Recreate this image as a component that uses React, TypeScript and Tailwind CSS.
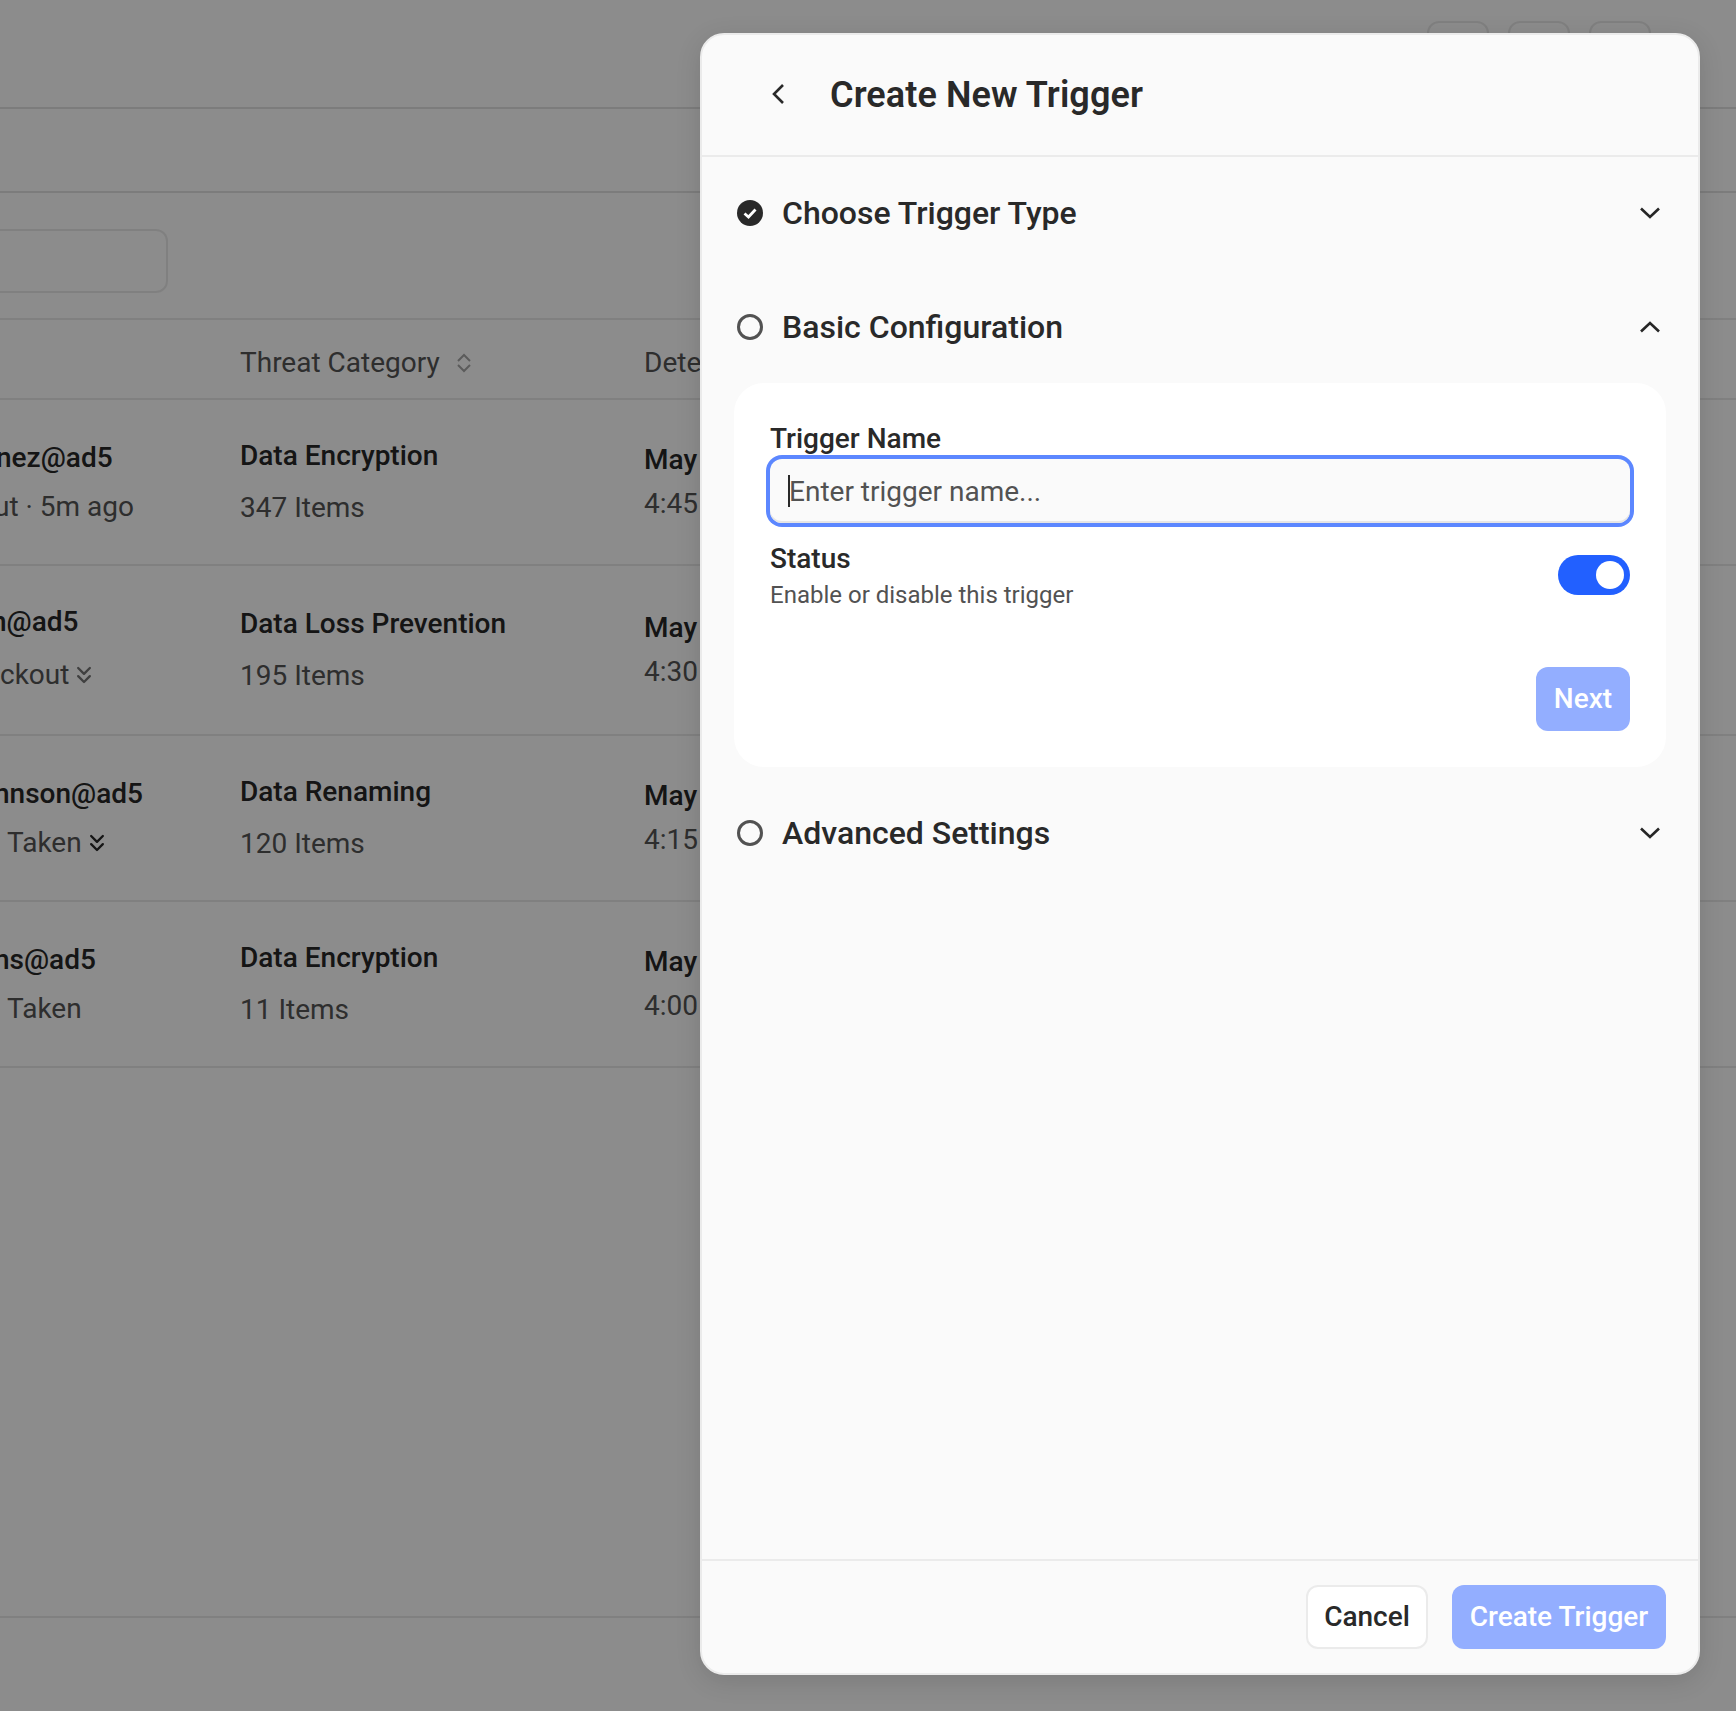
import { ChevronsDown } from 'lucide-react'

const rows = [
  {
    h: 'h-[166px]', colPad: '', who: 'nez@ad5', whoPad: '-ml-[4px]', sub: 'ut · 5m ago', subPad: '-ml-[6px]', more: '',
    cat: 'Data Encryption', items: '347 Items', time: '4:45',
  },
  {
    h: 'h-[170px]', colPad: 'pb-[3px]', who: 'n@ad5', whoPad: '-ml-[9px] mb-[4px]', sub: 'ckout', subPad: 'ml-0', more: 'text-[#737373]',
    cat: 'Data Loss Prevention', items: '195 Items', time: '4:30',
  },
  {
    h: 'h-[166px]', colPad: '', who: 'nnson@ad5', whoPad: '-ml-[6px]', sub: 'Taken', subPad: 'ml-[7px]', more: 'text-[#262626]',
    cat: 'Data Renaming', items: '120 Items', time: '4:15',
  },
  {
    h: 'h-[166px]', colPad: '', who: 'ns@ad5', whoPad: '-ml-[6px]', sub: 'Taken', subPad: 'ml-[7px]', more: '',
    cat: 'Data Encryption', items: '11 Items', time: '4:00',
  },
]

function Chevron({ up = false }: { up?: boolean }) {
  return (
    <svg width="22" height="14" viewBox="0 0 22 14" fill="none" className="text-[#262626]">
      <path d={up ? 'M2 11.5 L11 3 L20 11.5' : 'M2 2.5 L11 11 L20 2.5'} stroke="currentColor" strokeWidth="2.6" />
    </svg>
  )
}

function Section({ title, done = false, open = false, className = '' }: { title: string; done?: boolean; open?: boolean; className?: string }) {
  return (
    <div className={`flex h-[112px] items-center pl-[35px] pr-[37px] ${className}`}>
      {done ? (
        <svg width="26" height="26" viewBox="0 0 26 26" className="shrink-0">
          <circle cx="13" cy="13" r="13" fill="#292929" />
          <path d="M7.5 13.5 L11.5 17 L18.5 9.5" fill="none" stroke="#fff" strokeWidth="2.8" />
        </svg>
      ) : (
        <div className="h-[26px] w-[26px] shrink-0 rounded-full border-[3px] border-[#525252]" />
      )}
      <span className="ml-[19px] flex-1 text-[32px] leading-[40px] font-medium text-[#292929]">{title}</span>
      <Chevron up={open} />
    </div>
  )
}

export default function App() {
  return (
    <div className="relative h-[1711px] w-full overflow-hidden bg-[#fafafa] font-['Roboto',sans-serif]">
      {/* page behind the dialog */}
      <div className="flex h-[109px] justify-end gap-[19px] border-b-2 border-[#dedede] pr-[85px] pt-[21px]">
        <div className="h-[60px] w-[62px] rounded-xl border-2 border-[#e5e5e5]" />
        <div className="h-[60px] w-[62px] rounded-xl border-2 border-[#e5e5e5]" />
        <div className="h-[60px] w-[62px] rounded-xl border-2 border-[#e5e5e5]" />
      </div>
      <div className="h-[84px] border-b-2 border-[#dedede]" />
      <div className="flex h-[125px] items-start pt-[36px]">
        <div className="h-[64px] w-[168px] rounded-r-xl border-2 border-l-0 border-[#e5e5e5]" />
      </div>
      <div className="flex h-[82px] items-center border-y-2 border-[#e5e5e5] pt-[8px] text-[28px] text-[#525252]">
        <div className="flex w-[644px] items-center pl-[240px]">
          <span>Threat Category</span>
          <svg width="16" height="20" viewBox="0 0 16 20" fill="none" className="ml-[16px] text-[#a3a3a3]">
            <path d="M2 8 L8 2 L14 8 M2 12 L8 18 L14 12" stroke="currentColor" strokeWidth="2" />
          </svg>
        </div>
        <span>Detected</span>
      </div>
      {rows.map((r) => (
        <div key={r.cat + r.items} className={`${r.h} flex items-center border-b-2 border-[#e5e5e5] text-[28px] leading-[32px]`}>
          <div className={`flex w-[240px] flex-col gap-[17px] overflow-hidden ${r.colPad}`}>
            <span className={`${r.whoPad} font-medium text-[#262626]`}>{r.who}</span>
            <span className={`${r.subPad} flex items-center gap-[1px] text-[#525252]`}>
              {r.sub}
              {r.more && <ChevronsDown size={28} strokeWidth={2} className={`h-[28px] ${r.more}`} />}
            </span>
          </div>
          <div className="flex w-[404px] flex-col gap-[20px]">
            <span className="font-medium text-[#262626]">{r.cat}</span>
            <span className="text-[#525252]">{r.items}</span>
          </div>
          <div className="flex flex-col gap-[12px]">
            <span className="font-medium text-[#262626]">May 12</span>
            <span className="text-[#525252]">{r.time} PM</span>
          </div>
        </div>
      ))}
      <div className="mt-[548px] border-b-2 border-[#e5e5e5]" />

      {/* overlay */}
      <div className="absolute inset-0 bg-black/44" />

      {/* dialog */}
      <div className="absolute bottom-[36px] left-[700px] top-[33px] flex w-[1000px] flex-col rounded-3xl border-2 border-[#ebebeb] bg-[#fafafa] shadow-[0_6px_26px_rgba(0,0,0,0.12)]">
        <div className="flex h-[122px] shrink-0 items-center border-b-2 border-[#ebebeb] pb-[2px] pl-[68px]">
          <svg width="16" height="24" viewBox="0 0 16 24" fill="none">
            <path d="M13 3 L4 12 L13 21" stroke="#292929" strokeWidth="2.6" />
          </svg>
          <h1 className="ml-[44px] mt-[2px] text-[36px] leading-[44px] font-semibold tracking-[0.1px] text-[#292929]">Create New Trigger</h1>
        </div>

        <div className="flex-1">
          <Section title="Choose Trigger Type" done />
          <Section title="Basic Configuration" open className="mt-[2px]" />
          <div className="mx-[32px] rounded-[30px] bg-white px-[36px] pb-[36px] pt-[40px]">
            <label className="block text-[28px] leading-[32px] font-medium text-[#292929]">Trigger Name</label>
            <div className="relative mt-[4px]">
              <input
                placeholder="Enter trigger name..."
                className="h-[64px] w-full rounded-xl bg-[#fafafa] pl-[19px] text-[28px] text-[#525252] shadow-[inset_0_-2px_0_#e5e5e5] outline-none ring-4 ring-[#5c87ff] placeholder:text-[#525252]"
              />
              <div className="absolute left-[18px] top-[16px] h-[32px] w-[2px] bg-[#292929]" />
            </div>
            <div className="mt-[20px] flex items-center justify-between">
              <div>
                <div className="text-[28px] leading-[32px] font-medium text-[#292929]">Status</div>
                <div className="mt-[6px] text-[24px] leading-[28px] text-[#525252]">Enable or disable this trigger</div>
              </div>
              <div className="mb-[2px] flex h-[40px] w-[72px] items-center justify-end rounded-full bg-[#2260ff] pr-[6px]">
                <div className="h-[28px] w-[28px] rounded-full bg-white" />
              </div>
            </div>
            <div className="mt-[58px] flex justify-end">
              <button className="h-[64px] w-[94px] rounded-xl bg-[#93aeff] text-[28px] font-medium text-white">Next</button>
            </div>
          </div>
          <Section title="Advanced Settings" className="mt-[10px]" />
        </div>

        <div className="flex h-[114px] shrink-0 justify-end gap-[24px] border-t-2 border-[#ebebeb] pr-[32px] pt-[24px]">
          <button className="h-[64px] w-[122px] rounded-xl border-2 border-[#ebebeb] bg-white text-[28px] font-medium text-[#292929]">Cancel</button>
          <button className="h-[64px] w-[214px] rounded-xl bg-[#93aeff] text-[28px] font-medium text-white">Create Trigger</button>
        </div>
      </div>
    </div>
  )
}
